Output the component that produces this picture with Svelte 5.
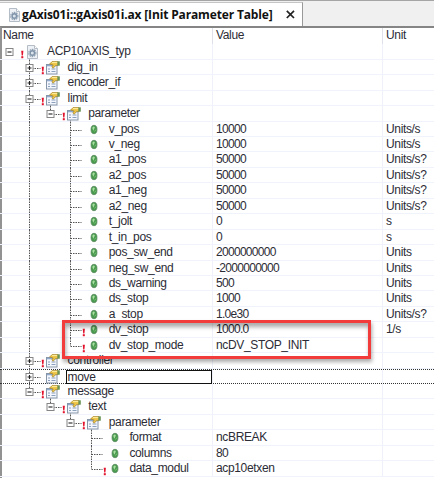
<script>
  const rows = [
    { l: 0, t: 'ACP10AXIS_typ', k: 'root', o: '-', e: 1 },
    { l: 1, t: 'dig_in', k: 'dir', o: '+', e: 1 },
    { l: 1, t: 'encoder_if', k: 'dir', o: '+' },
    { l: 1, t: 'limit', k: 'dir', o: '-', e: 1 },
    { l: 2, t: 'parameter', k: 'dir', o: '-', e: 1, g: [1], last: 1 },
    { l: 3, t: 'v_pos', v: '10000', u: 'Units/s', g: [1] },
    { l: 3, t: 'v_neg', v: '10000', u: 'Units/s', g: [1] },
    { l: 3, t: 'a1_pos', v: '50000', u: 'Units/s?', g: [1] },
    { l: 3, t: 'a2_pos', v: '50000', u: 'Units/s?', g: [1] },
    { l: 3, t: 'a1_neg', v: '50000', u: 'Units/s?', g: [1] },
    { l: 3, t: 'a2_neg', v: '50000', u: 'Units/s?', g: [1] },
    { l: 3, t: 't_jolt', v: '0', u: 's', g: [1] },
    { l: 3, t: 't_in_pos', v: '0', u: 's', g: [1] },
    { l: 3, t: 'pos_sw_end', v: '2000000000', u: 'Units', g: [1] },
    { l: 3, t: 'neg_sw_end', v: '-2000000000', u: 'Units', g: [1] },
    { l: 3, t: 'ds_warning', v: '500', u: 'Units', g: [1] },
    { l: 3, t: 'ds_stop', v: '1000', u: 'Units', g: [1] },
    { l: 3, t: 'a_stop', v: '1.0e30', u: 'Units/s?', g: [1] },
    { l: 3, t: 'dv_stop', v: '1000.0', u: '1/s', e: 1, g: [1] },
    { l: 3, t: 'dv_stop_mode', v: 'ncDV_STOP_INIT', e: 1, g: [1], last: 1 },
    { l: 1, t: 'controller', k: 'dir', o: '+', e: 1 },
    { l: 1, t: 'move', k: 'dir', o: '+', focus: 1 },
    { l: 1, t: 'message', k: 'dir', o: '-', e: 1, last: 1 },
    { l: 2, t: 'text', k: 'dir', o: '-', e: 1, last: 1 },
    { l: 3, t: 'parameter', k: 'dir', o: '-', e: 1, last: 1 },
    { l: 4, t: 'format', v: 'ncBREAK' },
    { l: 4, t: 'columns', v: '80' },
    { l: 4, t: 'data_modul', v: 'acp10etxen', e: 1, last: 1 }
  ];
  const guide = (l) => 29.5 + Math.round((l - 1) * 20.6);
  const textX = (l) => 47 + l * 20.6;
  const numeric = (v) => /^-?\d/.test(v ?? '');
</script>

{#snippet gear()}
  <path d="M.5 .5h7l3 3v10h-10z" fill="#eef1f5" stroke="#b4bcc6" />
  <path d="M7.5 .5v3h3" fill="#fff" stroke="#b4bcc6" />
  <circle cx="5.3" cy="8" r="3.6" fill="none" stroke="#8fa0b2" stroke-width="1.2" stroke-dasharray="1.6 .7" />
  <circle cx="5.3" cy="8" r="2.2" fill="#dbe4ec" stroke="#7d92a8" stroke-width="1.4" />
{/snippet}

<div class="window">
  <div class="tabs">
    <div class="tab">
      <svg class="file" width="11" height="14">{@render gear()}</svg>
      <span class="title">gAxis01i::gAxis01i.ax [Init Parameter Table]</span>
      <svg class="close" width="9" height="9" viewBox="0 0 9 9"><path d="M.8 .8l7.2 7.2M8 .8L.8 8" stroke="#222" stroke-width="1.7" /></svg>
    </div>
  </div>
  <div class="table">
    <div class="head">
      <div class="name">Name</div><div class="value">Value</div><div class="unit">Unit</div>
    </div>
    {#each rows as r}
      {@const x = guide(r.l)}
      {@const tx = textX(r.l)}
      <div class="row" class:focus={r.focus}>
        <div class="name">
          <svg class="gutter" width={tx - 2} height="16" style:width="{tx - 2}px">
            <g stroke="#555" stroke-dasharray="1.5 1" fill="none">
              {#each r.g ?? [] as g}<path d="M{guide(g)} 0V16" />{/each}
              {#if r.l > 0}
                <path d="M{x} 0V{r.last ? 8 : 16}M{x} 8.5h11" />
              {/if}
              {#if r.k && r.o === '-'}
                <path d="M{guide(r.l + 1)} 13V16" />
              {/if}
            </g>
            {#if r.k}
              {@const b = r.l ? x : 9.5}
              <rect x={b - 3.5} y="4.5" width="7" height="7" fill="#fff" stroke="#858585" />
              <path d="M{b - 2} 8h4{r.o === '+' ? `M${b} 6v4` : ''}" stroke="#222" stroke-width="1.1" />
            {/if}
            {#if r.e}
              {@const m = r.l ? x + 13.3 : 22.3}
              <path d="M{m - 1.1} 6.8h2.2l-.5 4.6h-1.2z" fill="#e3122c" />
              <rect x={m - 1} y="12.2" width="2" height="2" fill="#e3122c" />
            {/if}
            {#if r.k === 'root'}
              <g transform="translate(27 1)">{@render gear()}</g>
            {:else if r.k}
              <g transform="translate({x + 16.5} 1)">
                <rect x=".5" y="3.5" width="10.5" height="9.5" fill="#f3f7fd" stroke="#8795a8" />
                <path d="M1 4.6h9.5" stroke="#8fa9cc" stroke-width="1.4" />
                <path d="M2 8h2M5.5 8h4M2 10.5h2M5.5 10.5h4" stroke="#8ba0bd" />
                <path d="M3.6 3L6 .6h6v4H9.6L7.2 7.2 5.8 6l1.4-2z" fill="#edc445" stroke="#a4842d" stroke-width=".7" />
                <path d="M6 1.6h5.5" stroke="#fff0a0" />
                <path d="M11.4 .3h2.4v4.4h-2.4z" fill="#6a9455" />
              </g>
            {:else}
              <ellipse cx={x + 23.5} cy="7.5" rx="3" ry="4.2" fill="#4a9a50" stroke="#55825a" stroke-width=".7" />
              <path d="M{x + 21.7} 5.8l1.7-1.5 1 1.2-1.6 3.2z" fill="#a9dfa0" />
              <path d="M{x + 24} 9.5l1.5-2" stroke="#78c470" />
            {/if}
          </svg>
          <span class="label">{r.t}</span>
        </div>
        <div class="value" class:numeric={numeric(r.v)}>{r.v ?? ''}</div>
        <div class="unit">{r.u ?? ''}</div>
      </div>
    {/each}
  </div>
  <div class="highlight"></div>
</div>

<style>
  :global(body) { background: #fff; }
  .window {
    position: relative; width: 434px; height: 478px; overflow: hidden;
    display: flex; flex-direction: column; box-sizing: border-box;
    font: 12px/15px "Liberation Sans", Arial, sans-serif; color: #2c2c36; background: #fff;
  }
  .tabs { height: 26px; flex: none; box-sizing: border-box; background: #f0f0f0; border-top: 1px solid #a5a5a5; display: flex; padding-top: 1px; }
  .tab { width: 303px; box-sizing: border-box; background: #fff; border-top: 1px solid #c5c5c5; border-right: 1px solid #999; display: flex; align-items: center; padding-left: 9px; }
  .file { flex: none; margin-right: 2px; }
  .title { width: 250px; white-space: nowrap; font: bold 12px/18px "Open Sans", sans-serif; letter-spacing: -.15px; color: #111; }
  .close { margin-left: 14px; }
  .table { flex: 1; border-top: 2px solid #858585; border-left: 2px solid #929292; letter-spacing: -.35px; }
  .head, .row { display: flex; box-sizing: border-box; margin-left: -2px; white-space: pre; }
  .head { height: 16.4px; }
  .row { height: 15.44px; border-bottom: 1px solid #f0f3fb; }
  .name { width: 212px; flex: none; box-sizing: border-box; display: flex; }
  .head .name { padding-left: 3px; }
  .value { width: 170px; flex: none; box-sizing: border-box; border-left: 1px solid #eef1fa; padding-left: 3px; }
  .numeric { letter-spacing: -.7px; }
  .unit { flex: 1; border-left: 1px solid #eef1fa; padding-left: 3px; }
  .head .value, .head .unit { border-color: #dfe1e8; }
  .gutter { flex: none; }
  .label { padding-left: 2px; }
  .focus { border-top: 1px dotted #333; border-bottom: 1px dotted #333; }
  .focus .gutter { margin-top: -1px; }
  .focus .label { flex: 1; border: 1px solid #111; line-height: 12px; height: 14px; box-sizing: border-box; padding-left: 1px; }
  .highlight {
    position: absolute; left: 62px; top: 320px; width: 309px; height: 39px; box-sizing: border-box;
    border: 3px solid #f23c3c; box-shadow: 1px 3px 4px #0005, inset 1px 4px 4px #0005;
  }
</style>
